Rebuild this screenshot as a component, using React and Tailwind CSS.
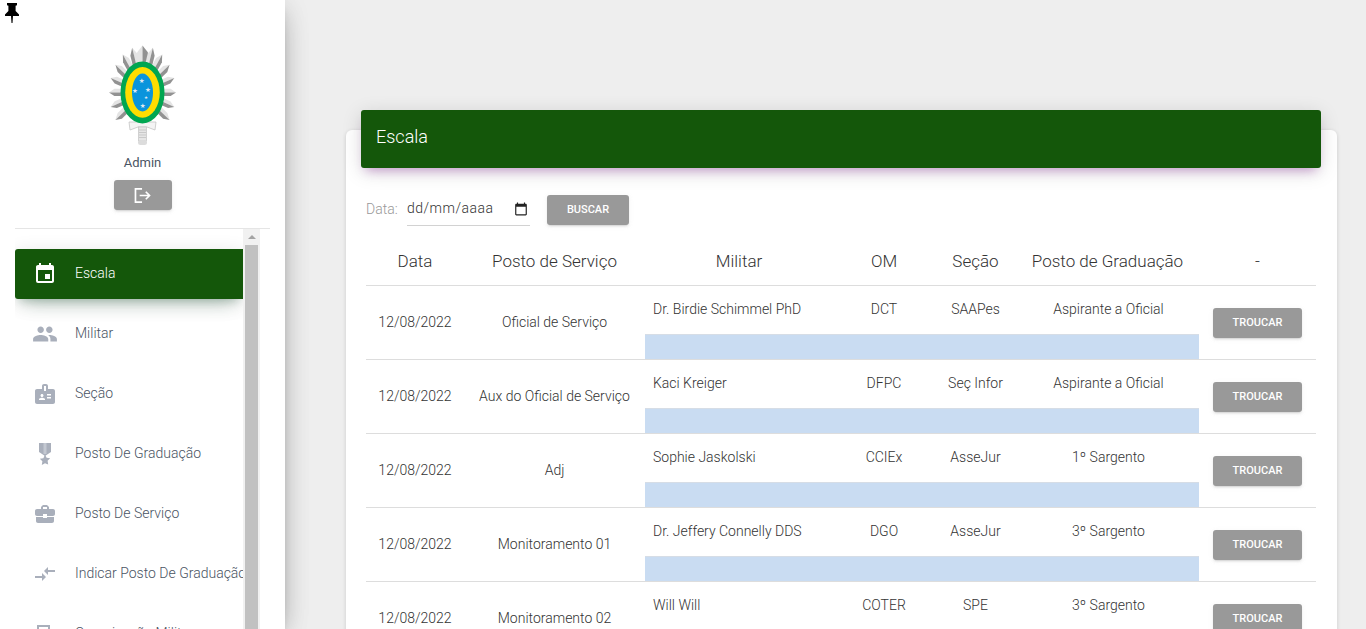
import React from 'react';
import { MdCalendarToday, MdEvent, MdCompareArrows, MdPeople, MdBadge, MdBusinessCenter } from 'react-icons/md';

const rows = [
  ['Oficial de Serviço', 'Dr. Birdie Schimmel PhD', 'DCT', 'SAAPes', 'Aspirante a Oficial'],
  ['Aux do Oficial de Serviço', 'Kaci Kreiger', 'DFPC', 'Seç Infor', 'Aspirante a Oficial'],
  ['Adj', 'Sophie Jaskolski', 'CCIEx', 'AsseJur', '1º Sargento'],
  ['Monitoramento 01', 'Dr. Jeffery Connelly DDS', 'DGO', 'AsseJur', '3º Sargento'],
  ['Monitoramento 02', 'Will Will', 'COTER', 'SPE', '3º Sargento'],
];

function Medal() {
  return (
    <svg viewBox="0 0 16 22" className="w-4 h-[22px] fill-[#a9afbb]">
      <path d="M2 0h12v9l-6 4-6-4z" />
      <path d="M6.5 0h3v11h-3z" fill="#c3c8d1" />
      <path d="M8 11.5l1.6 3.3 3.6.5-2.6 2.5.6 3.6L8 20.2l-3.2 1.7.6-3.6-2.6-2.5 3.6-.5z" />
    </svg>
  );
}

function BoxIcon() {
  return (
    <svg viewBox="0 0 24 24" className="w-6 h-6 fill-none stroke-[#a9afbb] stroke-2 mt-[2px]">
      <path d="M5 3h11v18H5z" />
    </svg>
  );
}

const nav = [
  { label: 'Escala', icon: <MdEvent size={24} />, active: true },
  { label: 'Militar', icon: <MdPeople size={26} /> },
  { label: 'Seção', icon: <MdBadge size={24} /> },
  { label: 'Posto De Graduação', icon: <Medal /> },
  { label: 'Posto De Serviço', icon: <MdBusinessCenter size={24} /> },
  { label: 'Indicar Posto De Graduação', icon: <MdCompareArrows size={24} /> },
  { label: 'Organização Militar', icon: <BoxIcon /> },
];

// pontas do resplendor em volta do brasao
function Rays() {
  const cx = 33.5;
  const cy = 47.4;
  const items = [];
  for (let i = -7; i <= 7; i++) {
    const a = (i * 18 * Math.PI) / 180;
    const s = Math.sin(a);
    const c = Math.cos(a);
    const tipX = cx + 33.5 * s;
    const tipY = cy - 47 * c;
    const bx = cx + 20 * s;
    const by = cy - 29 * c;
    // ombro da ponta, um pouco antes do bico
    const mx = bx + (tipX - bx) * 0.6;
    const my = by + (tipY - by) * 0.6;
    const w = i === 0 ? 5.5 : 3.6;
    const sign = i >= 0 ? -1 : 1;
    const half = (d) =>
      `M${tipX} ${tipY} L${mx + d * w * c} ${my + d * w * s} L${bx + d * w * c} ${by + d * w * s} L${bx} ${by} Z`;
    items.push(
      <g key={i}>
        <path d={half(sign)} fill="#e4e4e4" />
        <path d={half(-sign)} fill="#929292" />
      </g>
    );
  }
  return items;
}

function Logo() {
  return (
    <svg viewBox="0 0 67 100" className="w-[67px] h-[100px]">
      <Rays />
      <path d="M20 77 L47 77 L46 85 L38 82 L29 82 L21 85 Z" fill="#f4f4f4" stroke="#bdbdbd" strokeWidth="0.7" />
      <rect x="29.5" y="82" width="8" height="14" fill="#e6e6e6" stroke="#c4c4c4" strokeWidth="0.7" />
      <path d="M30 85h7M30 87.5h7M30 90h7M30 92.5h7" stroke="#bcbcbc" strokeWidth="0.7" />
      <rect x="29" y="95" width="9" height="5" rx="2.5" fill="#dcdcdc" />
      <ellipse cx="33.5" cy="47.4" rx="22" ry="31" fill="#00a651" />
      <ellipse cx="33.5" cy="47.4" rx="17.3" ry="25.3" fill="#ffdd00" />
      <ellipse cx="33.5" cy="47.4" rx="10.5" ry="19" fill="#0a94dc" />
      <g fill="#dfe8f2" fontFamily="'DejaVu Sans', sans-serif" fontSize="6.5" textAnchor="middle">
        <text x="32.7" y="37.8">★</text>
        <text x="26" y="48.2">★</text>
        <text x="39" y="46.8">★</text>
        <text x="37" y="54" fontSize="4.5">★</text>
        <text x="33.7" y="63.2">★</text>
      </g>
    </svg>
  );
}

function Sidebar() {
  return (
    <aside className="w-[285px] h-full shrink-0 bg-white flex flex-col shadow-[0_10px_30px_-12px_rgba(0,0,0,0.42),0_4px_25px_0_rgba(0,0,0,0.12),0_8px_10px_-5px_rgba(0,0,0,0.2)] z-10 relative">
      <div className="h-[228px] shrink-0 relative flex flex-col items-center">
        <svg viewBox="0 0 14 20" className="absolute left-[5px] top-[3px] w-[14px] h-5 fill-black">
          <path d="M2 0h10v2.2l-1.4.6v5.2L14 11.5V13H8l-.5 7h-1L6 13H0v-1.5L3.4 8V2.8L2 2.2z" />
        </svg>
        <div className="mt-[45px] h-[100px] w-[67px]">
          <Logo />
        </div>
        <div className="mt-[8px] text-[13px] leading-5 text-[#4a5463]">Admin</div>
        <button className="mt-[7px] w-[58px] h-[30px] rounded-[3px] bg-[#999999] text-white flex items-center justify-center shadow-[0_2px_2px_0_rgba(153,153,153,0.14),0_3px_1px_-2px_rgba(153,153,153,0.2),0_1px_5px_0_rgba(153,153,153,0.12)]">
          <svg viewBox="0 0 18 16" className="w-[17px] h-[15px] fill-none stroke-white stroke-[1.8]">
            <path d="M8.5 1H1.5v14h7" />
            <path d="M6 8h10M12.5 4l4 4-4 4" />
          </svg>
        </button>
      </div>
      <div className="mx-[15px] border-t border-[#e5e5e5] flex flex-1 min-h-0 overflow-hidden">
        <ul className="w-[228px] shrink-0 pt-5 flex flex-col gap-[10px] overflow-hidden">
          {nav.map((item) => (
            <li
              key={item.label}
              className={`h-[50px] shrink-0 flex items-center pl-[17px] rounded-l-[3px] overflow-hidden whitespace-nowrap text-sm font-light ${
                item.active
                  ? 'bg-[#14570a] text-white shadow-[0_12px_20px_-10px_rgba(20,87,50,0.28),0_4px_20px_0_rgba(0,0,0,0.12),0_7px_8px_-5px_rgba(20,87,50,0.2)]'
                  : 'text-[#4a5463]'
              }`}
            >
              <span className={`w-[26px] flex justify-center shrink-0 mr-[17px] ${item.active ? 'text-white' : 'text-[#a9afbb]'}`}>{item.icon}</span>
              <span className="pb-[2px]">{item.label}</span>
            </li>
          ))}
        </ul>
        <div className="w-[17px] shrink-0 bg-[#f1f1f1] flex flex-col items-center">
          <div className="h-[16px] shrink-0 flex items-center justify-center">
            <div className="w-0 h-0 border-x-[4px] border-x-transparent border-b-[4px] border-b-[#a3a3a3]"></div>
          </div>
          <div className="w-[13px] flex-1 bg-[#c1c1c1]"></div>
        </div>
      </div>
    </aside>
  );
}

function ScaleTable() {
  return (
    <table className="w-[950px] table-fixed border-collapse text-sm font-light text-[#333333]">
      <colgroup>
        <col className="w-[98px]" />
        <col className="w-[181px]" />
        <col className="w-[188px]" />
        <col className="w-[102px]" />
        <col className="w-[81px]" />
        <col className="w-[183px]" />
        <col className="w-[117px]" />
      </colgroup>
      <thead>
        <tr className="h-[49px] border-b border-[#dddddd] text-[17px] font-light">
          <th className="font-light pt-[2px]">Data</th>
          <th className="font-light pt-[2px]">Posto de Serviço</th>
          <th className="font-light pt-[2px]">Militar</th>
          <th className="font-light pt-[2px]">OM</th>
          <th className="font-light pt-[2px]">Seção</th>
          <th className="font-light pt-[2px]">Posto de Graduação</th>
          <th className="font-light pt-[2px]">-</th>
        </tr>
      </thead>
      <tbody>
        {rows.map((r, i) => (
          <React.Fragment key={i}>
            <tr className="h-[49px]">
              <td rowSpan={2} className="text-center border-b border-[#dddddd]">12/08/2022</td>
              <td rowSpan={2} className="text-center border-b border-[#dddddd]">{r[0]}</td>
              <td className="pl-2 pb-[2px]">{r[1]}</td>
              <td className="text-center pb-[2px]">{r[2]}</td>
              <td className="text-center pb-[2px]">{r[3]}</td>
              <td className="text-center pb-[2px] pl-[2px]">{r[4]}</td>
              <td rowSpan={2} className="text-center border-b border-[#dddddd] pt-[2px]">
                <button className="w-[89px] h-[30px] rounded-[3px] bg-[#999999] text-white text-[11px] font-medium shadow-[0_2px_2px_0_rgba(153,153,153,0.14),0_3px_1px_-2px_rgba(153,153,153,0.2),0_1px_5px_0_rgba(153,153,153,0.12)]">
                  TROUCAR
                </button>
              </td>
            </tr>
            <tr className="h-[25px] border-b border-[#dddddd]">
              <td colSpan={4} className="bg-[#c9dcf2] border-t border-[#d6dde6]"></td>
            </tr>
          </React.Fragment>
        ))}
      </tbody>
    </table>
  );
}

export default function App() {
  return (
    <div className="h-screen w-full flex overflow-hidden bg-[#eeeeee] font-['Roboto',sans-serif]">
      <Sidebar />
      <main className="flex-1 min-w-0 pl-[61px] pr-[29px] pt-[130px]">
        <div className="flow-root bg-white rounded-[6px] shadow-[0_1px_4px_0_rgba(0,0,0,0.14)] px-[20px] pb-10 h-[700px]">
          <div className="-mx-[5px] -mt-[20px] h-[58px] w-[960px] rounded-[3px] bg-[#14570a] text-white text-lg font-light flex items-center px-[15px] pb-1 shadow-[0_4px_20px_0_rgba(0,0,0,0.14),0_7px_10px_-5px_rgba(156,39,176,0.4)]">
            Escala
          </div>
          <div className="mt-[27px] flex items-center h-[30px]">
            <span className="text-sm font-light text-[#999999] w-[33px] pb-[2px]">Data:</span>
            <div className="ml-[8px] w-[123px] h-[31px] border-b border-[#d2d2d2] flex items-center justify-between pr-[2px] pb-[3px] text-sm font-light text-[#333333] tracking-[0.5px]">
              dd/mm/aaaa
              <MdCalendarToday size={14} className="text-[#222222] mt-[2px]" />
            </div>
            <button className="ml-[17px] w-[82px] h-[30px] rounded-[3px] bg-[#999999] text-white text-[11px] font-medium shadow-[0_2px_2px_0_rgba(153,153,153,0.14),0_3px_1px_-2px_rgba(153,153,153,0.2),0_1px_5px_0_rgba(153,153,153,0.12)]">
              BUSCAR
            </button>
          </div>
          <div className="mt-[11px]">
            <ScaleTable />
          </div>
        </div>
      </main>
    </div>
  );
}
